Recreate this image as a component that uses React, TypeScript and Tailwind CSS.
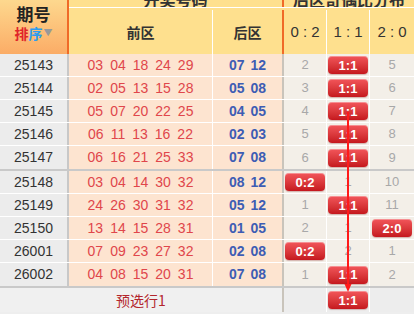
import React from 'react'

type Row = {
  no: string
  front: string[]
  back: string[]
  vals: string[]
  hit: number
}

const ROWS: Row[] = [
  { no: '25143', front: ['03', '04', '18', '24', '29'], back: ['07', '12'], vals: ['2', '1:1', '5'], hit: 1 },
  { no: '25144', front: ['02', '05', '13', '15', '28'], back: ['05', '08'], vals: ['3', '1:1', '6'], hit: 1 },
  { no: '25145', front: ['05', '07', '20', '22', '25'], back: ['04', '05'], vals: ['4', '1:1', '7'], hit: 1 },
  { no: '25146', front: ['06', '11', '13', '16', '22'], back: ['02', '03'], vals: ['5', '1:1', '8'], hit: 1 },
  { no: '25147', front: ['06', '16', '21', '25', '33'], back: ['07', '08'], vals: ['6', '1:1', '9'], hit: 1 },
  { no: '25148', front: ['03', '04', '14', '30', '32'], back: ['08', '12'], vals: ['0:2', '1', '10'], hit: 0 },
  { no: '25149', front: ['24', '26', '30', '31', '32'], back: ['05', '12'], vals: ['1', '1:1', '11'], hit: 1 },
  { no: '25150', front: ['13', '14', '15', '28', '31'], back: ['01', '05'], vals: ['2', '1', '2:0'], hit: 2 },
  { no: '26001', front: ['07', '09', '23', '27', '32'], back: ['02', '08'], vals: ['0:2', '2', '1'], hit: 0 },
  { no: '26002', front: ['04', '08', '15', '20', '31'], back: ['07', '08'], vals: ['1', '1:1', '2'], hit: 1 },
]

const FONT = "font-['Liberation_Sans','Noto_Sans_CJK_SC',Arial,sans-serif]"

function Badge({ label }: { label: string }) {
  return (
    <div className="w-[40px] h-[18px] rounded-[4px] bg-linear-to-b from-[#f2555a] to-[#c5161d] shadow-[inset_0_1px_0_rgba(255,255,255,0.35),0_1px_1px_rgba(120,0,0,0.25)] flex items-center justify-center text-white text-[13px] font-bold leading-none">
      {label}
    </div>
  )
}

export default function App() {
  const distW = ['w-[43px] border-r border-white', 'w-[43px] border-r border-white', 'w-[44px]']

  return (
    <div className={`relative w-[414px] h-[314px] overflow-hidden bg-[#eeeeee] text-[#333] ${FONT}`}>
      {/* header */}
      <div className="flex h-[54px]">
        <div className="w-[69px] shrink-0 border-r-2 border-[#f06a28] bg-linear-to-b from-[#fdd88e] to-[#fbac66] flex flex-col items-center pt-[4px] font-['Noto_Sans_CJK_SC',sans-serif]">
          <div className="text-[17px] font-bold leading-[20px] text-[#222]">期号</div>
          <div className="mt-[1px] flex items-center text-[14px] font-bold leading-[16px]">
            <span className="text-[#e0242a]">排</span>
            <span className="text-[#2b9cf0]">序</span>
            <span className="ml-[1px] text-[9px] text-[#999]">▼</span>
          </div>
        </div>
        <div className="flex-1 flex flex-col bg-[#fee08e] font-['Noto_Sans_CJK_SC',sans-serif]">
          <div className="flex h-[8px] border-b border-white">
            <div className="w-[213px] flex items-end justify-center overflow-hidden">
              <span className="text-[16px] font-bold leading-[16px] text-[#333]">开奖号码</span>
            </div>
            <div className="flex-1 border-l-2 border-[#f06a28] flex items-end justify-center overflow-hidden">
              <span className="text-[16px] font-bold leading-[16px] text-[#333]">后区奇偶比分布</span>
            </div>
          </div>
          <div className="flex flex-1 pt-[2px]">
            <div className="w-[144px] border-r border-white flex items-center justify-center text-[14px] font-bold">前区</div>
            <div className="w-[71px] border-r-2 border-[#f06a28] flex items-center justify-center text-[14px] font-bold">后区</div>
            {['0 : 2', '1 : 1', '2 : 0'].map((h, i) => (
              <div key={h} className={`${distW[i]} flex items-center justify-center text-[15px] text-[#333] ${FONT}`}>
                {h}
              </div>
            ))}
          </div>
        </div>
      </div>

      {/* rows */}
      {ROWS.map((r, idx) => {
        const groupEnd = idx === 4 || idx === 9
        return (
          <div
            key={r.no}
            className={`flex h-[23px] ${groupEnd ? 'border-b-2 border-[#c9c9c9] h-[25px]' : 'border-b border-white'}`}
          >
            <div className="w-[69px] shrink-0 bg-[#ececec] border-r-2 border-[#c8c8c8] flex items-center justify-center text-[14px] text-[#333]">
              {r.no}
            </div>
            <div className="w-[144px] bg-[#fde4d0] border-r border-white flex items-center justify-center gap-[7px] text-[14px] text-[#e0464b]">
              {r.front.map((n, i) => (
                <span key={i}>{n}</span>
              ))}
            </div>
            <div className="w-[71px] bg-[#fde4d0] border-r-2 border-[#c9c4bb] flex items-center justify-center gap-[6px] text-[14px] font-bold text-[#3d5db4]">
              {r.back.map((n, i) => (
                <span key={i}>{n}</span>
              ))}
            </div>
            {r.vals.map((v, i) => (
              <div
                key={i}
                className={`${distW[i]} bg-[#f3efe8] flex items-center justify-center text-[13px] text-[#a8a8a8]`}
              >
                {i === r.hit ? <Badge label={v} /> : v}
              </div>
            ))}
          </div>
        )
      })}

      {/* preselect row */}
      <div className="flex h-[24px]">
        <div className="w-[284px] shrink-0 bg-[#f0f0f0] border-r-2 border-[#c9c4bb] flex items-center justify-center text-[14px] text-[#b3262c] font-['Noto_Sans_CJK_SC',sans-serif]">
          预选行1
        </div>
        <div className="w-[43px] border-r border-white bg-[#ededed]" />
        <div className="w-[43px] border-r border-white bg-[#ededed] flex items-center justify-center">
          <Badge label="1:1" />
        </div>
        <div className="w-[44px] bg-[#ededed]" />
      </div>

      {/* trend line */}
      <svg className="absolute left-0 top-0 pointer-events-none" width="414" height="314">
        <line x1="348" y1="112" x2="348" y2="286" stroke="#ff1a1a" strokeWidth="2" />
        <polygon points="344.5,284 351.5,284 348,292" fill="#ff1a1a" />
      </svg>
    </div>
  )
}
